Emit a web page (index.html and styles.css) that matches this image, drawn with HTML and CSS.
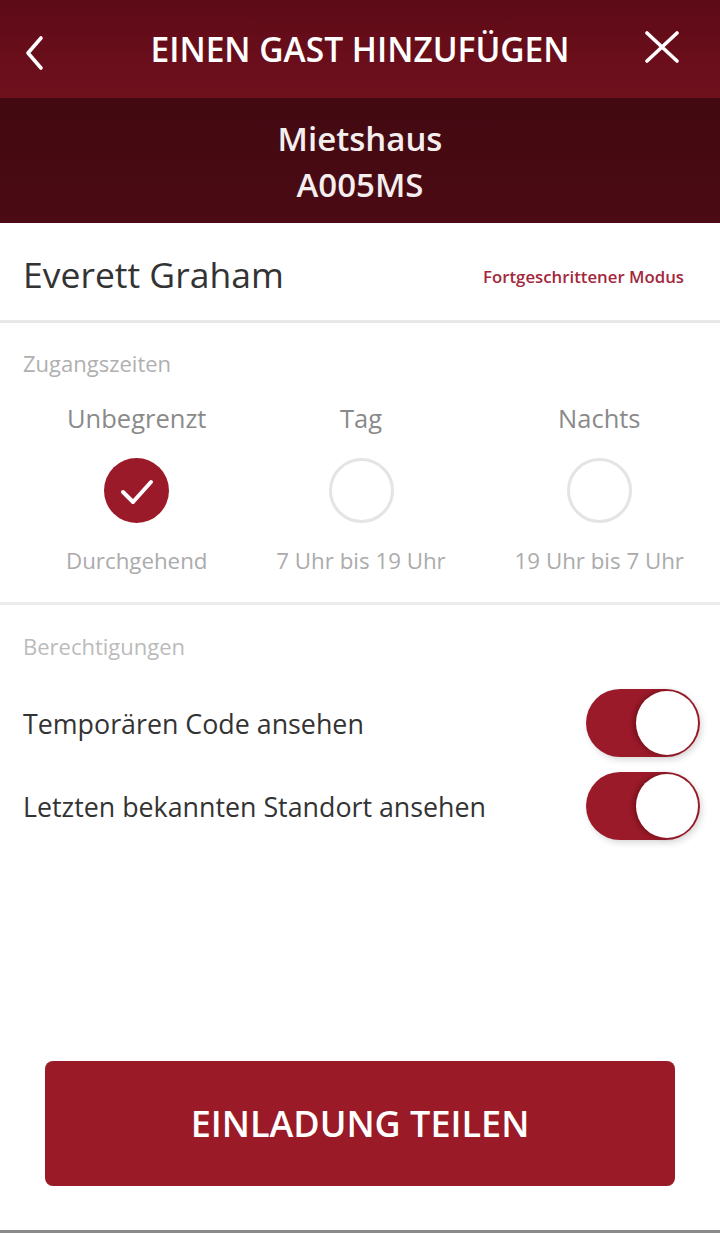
FILE: index.html
```html
<!DOCTYPE html>
<html lang="de">
<head>
<meta charset="utf-8">
<title>Einen Gast hinzufügen</title>
<link rel="stylesheet" href="styles.css">
</head>
<body>
<div class="page">
  <header class="topbar">
    <svg class="icon back" viewBox="0 0 20 36" width="20" height="36"><path d="M17 3 L4 18 L17 33" fill="none" stroke="#fff" stroke-width="3.6" stroke-linecap="round" stroke-linejoin="round"/></svg>
    <h1 class="title">EINEN GAST HINZUFÜGEN</h1>
    <svg class="icon close" viewBox="0 0 36 32" width="36" height="32"><path d="M3 2 L33 30 M33 2 L3 30" fill="none" stroke="#fff" stroke-width="3.6" stroke-linecap="round"/></svg>
  </header>
  <div class="property">
    <div>Mietshaus</div>
    <div>A005MS</div>
  </div>
  <div class="guest">
    <div class="guest-name">Everett Graham</div>
    <div class="advanced">Fortgeschrittener Modus</div>
  </div>
  <section class="section times">
    <div class="section-label">Zugangszeiten</div>
    <div class="options">
      <div class="option">
        <div class="opt-title">Unbegrenzt</div>
        <div class="radio checked">
          <svg viewBox="0 0 64 64" width="64" height="64"><path d="M18 33 L28 43 L46 23" fill="none" stroke="#fff" stroke-width="4" stroke-linecap="round" stroke-linejoin="round"/></svg>
        </div>
        <div class="opt-sub">Durchgehend</div>
      </div>
      <div class="option">
        <div class="opt-title">Tag</div>
        <div class="radio"></div>
        <div class="opt-sub">7 Uhr bis 19 Uhr</div>
      </div>
      <div class="option">
        <div class="opt-title">Nachts</div>
        <div class="radio"></div>
        <div class="opt-sub">19 Uhr bis 7 Uhr</div>
      </div>
    </div>
  </section>
  <section class="section perms">
    <div class="section-label">Berechtigungen</div>
    <div class="perm-row">
      <div class="perm-text">Temporären Code ansehen</div>
      <div class="toggle"><div class="knob"></div></div>
    </div>
    <div class="perm-row">
      <div class="perm-text">Letzten bekannten Standort ansehen</div>
      <div class="toggle"><div class="knob"></div></div>
    </div>
  </section>
  <div class="footer">
    <button class="share">EINLADUNG TEILEN</button>
  </div>
  <div class="bottom-line"></div>
</div>
</body>
</html>
```

FILE: styles.css
```css
* { box-sizing: border-box; }
html, body { margin: 0; padding: 0; }
body {
  font-family: "Open Sans", "Noto Sans", sans-serif;
  background: #fff;
  color: #333;
}
.page {
  width: 720px;
  height: 1233px;
  display: flex;
  flex-direction: column;
  overflow: hidden;
}
.topbar {
  height: 98px;
  flex: none;
  display: grid;
  grid-template-columns: 1fr auto 1fr;
  align-items: center;
  padding: 0 40px 0 24px;
  background: linear-gradient(180deg, #5c0b17 0%, #6a0e1b 60%, #6f101d 100%);
}
.icon { display: block; }
.back { margin-top: 8px; justify-self: start; }
.close { margin-top: -4px; justify-self: end; }
.title {
  margin: 0;
  color: #fff;
  font-size: 33.5px;
  font-weight: 600;
  letter-spacing: 0;
  transform: translateX(8px);
}
.property {
  height: 125px;
  flex: none;
  background: linear-gradient(180deg, #420911 0%, #4b0a14 100%);
  color: #f4eeee;
  font-size: 33px;
  font-weight: 600;
  text-align: center;
  line-height: 46px;
  padding-top: 18px;
}
.guest {
  height: 100px;
  flex: none;
  display: flex;
  align-items: center;
  justify-content: space-between;
  padding: 0 36px 0 23px;
  border-bottom: 3px solid #e8e8e8;
}
.guest-name {
  font-size: 35.5px;
  color: #333;
  margin-top: 4px;
}
.advanced {
  color: #a3283c;
  font-size: 16.8px;
  font-weight: 600;
  margin-top: 10px;
}
.section { flex: none; }
.times {
  border-bottom: 3px solid #ececec;
  height: 282px;
  padding-top: 26px;
}
.section-label {
  padding-left: 23px;
  font-size: 22px;
  color: #b0b0b0;
  line-height: 28px;
}
.options {
  display: flex;
  justify-content: space-between;
  padding: 24px 36px 0 66px;
}
.option {
  display: flex;
  flex-direction: column;
  align-items: center;
}
.opt-title {
  font-size: 25.5px;
  color: #8a8a8a;
  line-height: 34px;
}
.radio {
  width: 65px;
  height: 65px;
  border-radius: 50%;
  border: 3px solid #e4e4e4;
  margin-top: 23px;
}
.radio.checked {
  background: #9a1a2a;
  border: none;
  display: flex;
  align-items: center;
  justify-content: center;
}
.opt-sub {
  font-size: 22.3px;
  color: #ababab;
  line-height: 30px;
  margin-top: 23px;
}
.perms {
  padding-top: 27px;
}
.perms .section-label {
  color: #bbb;
  margin-bottom: 29px;
}
.perm-row {
  display: flex;
  align-items: center;
  justify-content: space-between;
  padding: 0 20px 0 23px;
  height: 68px;
  margin-bottom: 15px;
}
.perm-text {
  font-size: 26.8px;
  color: #333;
}
.toggle {
  width: 114px;
  height: 68px;
  border-radius: 34px;
  background: #9a1a2a;
  position: relative;
  box-shadow: 2px 3px 6px rgba(0,0,0,0.15);
}
.knob {
  position: absolute;
  right: 2px;
  top: 2px;
  width: 62px;
  height: 64px;
  border-radius: 50%;
  background: #fff;
  box-shadow: -3px 0 4px rgba(60,0,0,0.35);
}
.footer {
  margin-top: auto;
  padding: 0 45px 44px;
}
.share {
  display: block;
  width: 100%;
  height: 125px;
  border: none;
  border-radius: 8px;
  background: #9a1a27;
  color: #fff;
  font-family: "Open Sans", "Noto Sans", sans-serif;
  font-size: 36px;
  font-weight: 600;
  padding: 0;
}
.bottom-line {
  height: 3px;
  background: #8a8a8a;
  flex: none;
}
```
